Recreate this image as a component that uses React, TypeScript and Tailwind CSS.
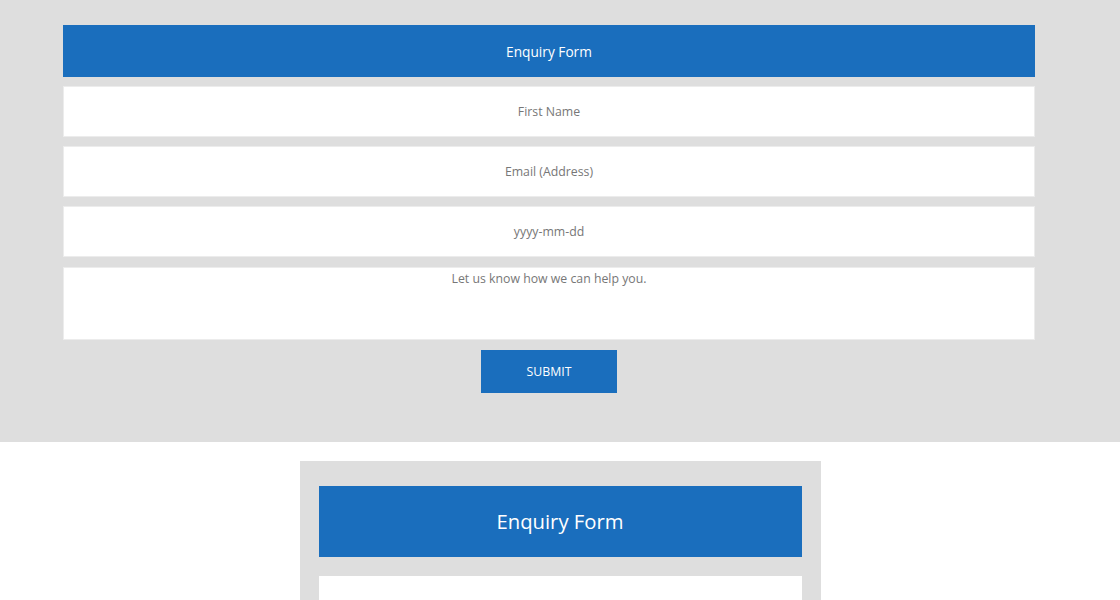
export default function App() {
  return (
    <div className="w-full min-h-[600px] bg-white" style={{ fontFamily: "'Open Sans', sans-serif" }}>
      {/* full width form */}
      <section className="bg-[#dedede] pt-[25px] pb-[49px]">
        <form className="ml-[63px] w-[972px] flex flex-col" onSubmit={(e) => e.preventDefault()}>
          <div className="h-[52px] pt-[2px] bg-[#1a6ebd] flex items-center justify-center text-white text-[13.7px]">
            Enquiry Form
          </div>
          <input
            placeholder="First Name"
            className="mt-[9px] h-[51px] bg-white border border-[#ececec] text-center text-[12.3px] text-[#666] placeholder:text-[#777] outline-none"
          />
          <input
            placeholder="Email (Address)"
            className="mt-[9px] h-[51px] bg-white border border-[#ececec] text-center text-[12.3px] text-[#666] placeholder:text-[#777] outline-none"
          />
          <input
            placeholder="yyyy-mm-dd"
            className="mt-[9px] h-[51px] bg-white border border-[#ececec] text-center text-[12.3px] text-[#666] placeholder:text-[#777] outline-none"
          />
          <textarea
            placeholder="Let us know how we can help you."
            className="mt-[10px] h-[73px] bg-white border border-[#ececec] text-center text-[12.3px] pt-[2px] text-[#666] placeholder:text-[#777] outline-none resize-none"
          />
          <button
            type="submit"
            className="mt-[10px] self-center w-[136px] h-[43px] pt-[2px] bg-[#1a6ebd] text-white text-[12.3px] uppercase"
          >
            Submit
          </button>
        </form>
      </section>

      {/* boxed form */}
      <div className="pt-[19px] flex justify-center">
        <div className="w-[521px] bg-[#dedede] px-[19px] pt-[25px] pb-[30px] flex flex-col gap-[19px]">
          <div className="h-[71px] bg-[#1a6ebd] flex items-center justify-center text-white text-[20.3px]">
            Enquiry Form
          </div>
          <div className="h-[51px] bg-white" />
        </div>
      </div>
    </div>
  );
}
